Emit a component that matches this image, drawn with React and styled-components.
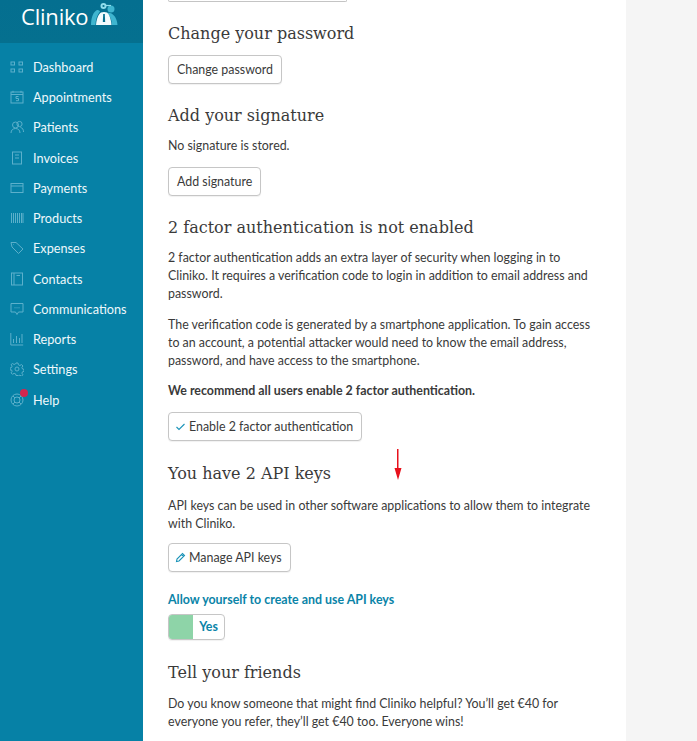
import React from 'react'
import styled, { createGlobalStyle } from 'styled-components'

const Global = createGlobalStyle`
  html, body {
    margin: 0;
    height: 100%;
    overflow: hidden;
    background: #f5f5f5;
  }
`

const Page = styled.div`
  display: flex;
  width: 697px;
  height: 741px;
  overflow: hidden;
  font-family: 'Lato', 'Open Sans', sans-serif;
  font-size: 12.4px;
  color: #3a3a3a;
  position: relative;
`

const Sidebar = styled.nav`
  width: 143px;
  flex: none;
  background: #0681a6;
`

const Brand = styled.div`
  height: 43px;
  background: linear-gradient(#046f90, #05708f);
  display: flex;
  align-items: flex-start;
  padding: 1px 0 0 21px;
  box-sizing: border-box;
  gap: 3px;
`

const BrandName = styled.span`
  font-family: 'Open Sans', sans-serif;
  font-size: 22px;
  color: #fff;
  line-height: 30px;
  letter-spacing: -0.2px;
`

const NavList = styled.ul`
  list-style: none;
  margin: 0;
  padding: 8.8px 0 0 10px;
`

const NavItem = styled.li`
  height: 30.25px;
  display: flex;
  align-items: center;
  color: #eef8fb;
  font-size: 12.7px;
  position: relative;
`

const NavIcon = styled.svg`
  width: 14px;
  height: 14px;
  margin-right: 9px;
  flex: none;
  fill: none;
  stroke: #5cb0cb;
  stroke-width: 1;
`

const Badge = styled.span`
  position: absolute;
  left: 10px;
  top: 4px;
  width: 8px;
  height: 8px;
  border-radius: 50%;
  background: #d3264f;
`

const Main = styled.main`
  width: 483px;
  flex: none;
  background: #fff;
  box-sizing: border-box;
  padding: 0 25px;
`

const Stub = styled.div`
  width: 179px;
  height: 2px;
  border: 1px solid #c4c4c4;
  border-top: 0;
  border-radius: 0 0 4px 4px;
  box-sizing: border-box;
  background: #fff;
`

const Heading = styled.h2`
  font-family: 'DejaVu Serif', serif;
  font-weight: 400;
  font-size: 16px;
  line-height: 24px;
  color: #3a3a3a;
  margin: ${(p) => p.$top}px 0 0;
`

const Text = styled.p`
  margin: ${(p) => p.$top}px 0 0;
  line-height: 18px;
  font-weight: ${(p) => (p.$bold ? 700 : 400)};
`

const Button = styled.button`
  display: flex;
  align-items: center;
  gap: 3px;
  height: 29px;
  margin-top: ${(p) => p.$top}px;
  padding: 0 8px;
  background: #fff;
  border: 1px solid #c6c6c6;
  border-radius: 4px;
  box-shadow: 0 1px 1px rgba(0, 0, 0, 0.06);
  font-family: inherit;
  font-size: 12.4px;
  color: #3a3a3a;
`

const BtnIcon = styled.svg`
  width: 11px;
  height: 11px;
  margin-left: -2px;
  fill: none;
  stroke: #1a93b8;
  stroke-width: 1.1;
`

const SwitchLabel = styled.div`
  margin-top: 19px;
  line-height: 18px;
  font-weight: 700;
  color: #0a84a8;
`

const Switch = styled.div`
  display: flex;
  width: 57px;
  height: 26px;
  margin-top: 5px;
  border: 1px solid #c6c6c6;
  border-radius: 4px;
  box-sizing: border-box;
  overflow: hidden;
  box-shadow: 0 1px 1px rgba(0, 0, 0, 0.06);
`

const SwitchFill = styled.div`
  width: 24px;
  background: #8ed4a8;
`

const SwitchValue = styled.div`
  flex: 1;
  text-align: center;
  line-height: 24px;
  font-weight: 700;
  color: #0a84a8;
`

const Rail = styled.div`
  flex: 1;
  background: #f5f5f5;
`

const Arrow = styled.svg`
  position: absolute;
  left: 394px;
  top: 449px;
  width: 8px;
  height: 31px;
`

const icons = {
  Dashboard: (
    <>
      <rect x="1" y="2" width="3.5" height="3" />
      <rect x="9" y="2" width="3.5" height="3" />
      <rect x="1" y="9" width="3.5" height="3" />
      <rect x="9" y="9" width="3.5" height="3" />
    </>
  ),
  Appointments: (
    <>
      <rect x="1" y="2" width="12" height="11" />
      <path d="M1 4.5h12M3 .8v2M11 .8v2M8.5 6.5H6v2h2.5v2.2H6" />
    </>
  ),
  Patients: (
    <>
      <circle cx="5.5" cy="5" r="3" />
      <circle cx="9.5" cy="4" r="2.6" />
      <path d="M1 13c0-3 2-4.5 4.5-4.5S10 10 10 13M10.500 7.500c2 .3 3 2 3 4.500" />
    </>
  ),
  Invoices: (
    <>
      <rect x="2.500" y="1" width="9" height="12" />
      <path d="M5 4h4M5 7h4" />
    </>
  ),
  Payments: (
    <>
      <rect x="1" y="2.500" width="12" height="9" />
      <path d="M1 5h12" />
    </>
  ),
  Products: <path d="M1.500 2v10M3.500 2v10M5.500 2v10M7.500 2v10M9.500 2v10M11.500 2v10M13 2v10" />,
  Expenses: <path d="M1 1.500h5l7 6.500-4.500 4.500L2 6zM3.500 3.500h.5" />,
  Contacts: (
    <>
      <rect x="1.500" y="1" width="11" height="12" />
      <path d="M4 1v12M6.500 3.500h3.500" />
    </>
  ),
  Communications: (
    <>
      <path d="M1 1.500h12v8.500H8.500L7 12.500 5.500 10H1z" />
      <path d="M4.500 5.800h1M6.500 5.800h1M8.500 5.800h1" />
    </>
  ),
  Reports: <path d="M.8 1v12h12.400M3.500 7v4M6.500 4v7M9.500 6v5M12 2v9" />,
  Settings: (
    <>
      <circle cx="7" cy="7" r="2" />
      <path d="M6 1h2l.4 1.800 1.500.7 1.600-1 1.400 1.500-1 1.500.6 1.500 1.500.4v2l-1.500.4-.6 1.400 1 1.600-1.400 1.400-1.600-1-1.500.6L8 13.500H6l-.4-1.600-1.500-.6-1.600 1-1.400-1.400 1-1.600-.6-1.400L0 8V6l1.500-.4.600-1.500-1-1.500L2.500 1.500l1.600 1 1.500-.7z" />
    </>
  ),
  Help: (
    <>
      <circle cx="7" cy="7" r="6" />
      <circle cx="7" cy="7" r="3" />
      <path d="M3 3l2 2M11 3 9 5M3 11l2-2M11 11 9 9" />
    </>
  ),
}

const navItems = Object.keys(icons)

function Logo() {
  return (
    <svg width="27" height="24" viewBox="0 0 27 24" style={{ marginTop: 1 }}>
      <path d="M0 23C0 16 2 10 6 8c1.500 0 2.500.5 3 1.500C6 13 4.500 18 4.500 23z" fill="#3fb5cf" />
      <circle cx="20" cy="7" r="3.500" fill="#3fb5cf" />
      <path d="M16 11c5-1 10 4 10.500 12H21c0-5-2-9-5-12z" fill="#3fb5cf" />
      <path d="M5 23c.5-6 2.500-11 5-12.500 2-.8 4-.8 6 0 2.500 2 4 7 4.500 12.500z" fill="#f2fbfd" />
      <path d="M12.200 12h1.600l.4 8h-2.400z" fill="#05708f" />
      <circle cx="12.500" cy="4" r="3" fill="#8fdcec" />
      <circle cx="12.500" cy="4" r="1.100" fill="#05708f" />
      <path d="M15 3.500h5" stroke="#8fdcec" strokeWidth="1.200" />
    </svg>
  )
}

export default function App() {
  return (
    <Page>
      <Global />
      <Sidebar>
        <Brand>
          <BrandName>Cliniko</BrandName>
          <Logo />
        </Brand>
        <NavList>
          {navItems.map((name) => (
            <NavItem key={name}>
              <NavIcon viewBox="0 0 14 14">{icons[name]}</NavIcon>
              {name}
              {name === 'Help' && <Badge />}
            </NavItem>
          ))}
        </NavList>
      </Sidebar>
      <Main>
        <Stub />
        <Heading $top={20}>Change your password</Heading>
        <Button $top={9}>Change password</Button>
        <Heading $top={20}>Add your signature</Heading>
        <Text $top={9}>No signature is stored.</Text>
        <Button $top={12}>Add signature</Button>
        <Heading $top={20}>2 factor authentication is not enabled</Heading>
        <Text $top={9}>
          2 factor authentication adds an extra layer of security when logging in to Cliniko. It
          requires a verification code to login in addition to email address and password.
        </Text>
        <Text $top={13}>
          The verification code is generated by a smartphone application. To gain access to an
          account, a potential attacker would need to know the email address, password, and have
          access to the smartphone.
        </Text>
        <Text $top={12} $bold>
          We recommend all users enable 2 factor authentication.
        </Text>
        <Button $top={12}>
          <BtnIcon viewBox="0 0 11 11">
            <path d="M1.500 6l2.500 2.500L9.500 3" />
          </BtnIcon>
          Enable 2 factor authentication
        </Button>
        <Heading $top={21}>You have 2 API keys</Heading>
        <Text $top={11}>
          API keys can be used in other software applications to allow them to integrate with
          Cliniko.
        </Text>
        <Button $top={10}>
          <BtnIcon viewBox="0 0 11 11">
            <path d="M1.500 9.500l.5-2.500 5.500-5.500 2 2L4 9zM6.500 2.500l2 2" />
          </BtnIcon>
          Manage API keys
        </Button>
        <SwitchLabel>Allow yourself to create and use API keys</SwitchLabel>
        <Switch>
          <SwitchFill />
          <SwitchValue>Yes</SwitchValue>
        </Switch>
        <Heading $top={21}>Tell your friends</Heading>
        <Text $top={10}>
          Do you know someone that might find Cliniko helpful? You’ll get €40 for everyone you
          refer, they’ll get €40 too. Everyone wins!
        </Text>
      </Main>
      <Rail />
      <Arrow viewBox="0 0 8 31">
        <path d="M3 0h1.500v20H3z M0.500 19h7L4 31z" fill="#e8111c" />
      </Arrow>
    </Page>
  )
}
